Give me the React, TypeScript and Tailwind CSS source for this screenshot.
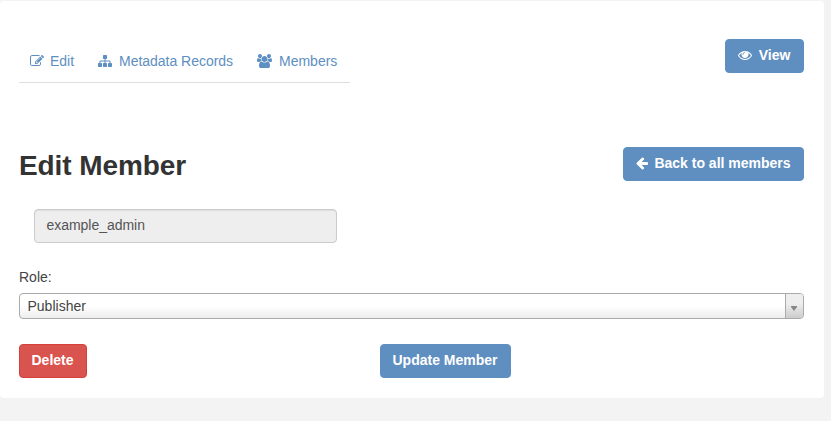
import type { ReactNode } from "react";

type IconProps = { d: string; viewBox: string; className: string };

function Icon({ d, viewBox, className }: IconProps) {
  return (
    <svg viewBox={viewBox} className={`shrink-0 ${className}`} fill="currentColor" aria-hidden="true">
      <path d={d} />
    </svg>
  );
}

const PENCIL =
  "M888 1184l116-116-152-152-116 116v56h96v96h56zm440-720q-16-16-33 1l-350 350q-17 17-1 33t33-1l350-350q17-17 1-33zm80 594v190q0 119-84.5 203.5t-203.5 84.5h-832q-119 0-203.5-84.5t-84.5-203.5v-832q0-119 84.5-203.5t203.5-84.5h832q63 0 117 25 15 7 18 23 3 17-9 29l-49 49q-14 14-32 8-23-6-45-6h-832q-66 0-113 47t-47 113v832q0 66 47 113t113 47h832q66 0 113-47t47-113v-126q0-13 9-22l64-64q15-15 35-7t20 29zm-96-738l288 288-672 672h-288v-288zm444 132l-92 92-288-288 92-92q28-28 68-28t68 28l152 152q28 28 28 68t-28 68z";
const SITEMAP =
  "M1792 1248v320q0 40-28 68t-68 28h-320q-40 0-68-28t-28-68v-320q0-40 28-68t68-28h96v-192h-512v192h96q40 0 68 28t28 68v320q0 40-28 68t-68 28h-320q-40 0-68-28t-28-68v-320q0-40 28-68t68-28h96v-192h-512v192h96q40 0 68 28t28 68v320q0 40-28 68t-68 28h-320q-40 0-68-28t-28-68v-320q0-40 28-68t68-28h96v-192q0-52 38-90t90-38h512v-192h-96q-40 0-68-28t-28-68v-320q0-40 28-68t68-28h320q40 0 68 28t28 68v320q0 40-28 68t-68 28h-96v192h512q52 0 90 38t38 90v192h96q40 0 68 28t28 68z";
const USERS =
  "M657 896q-162 5-265 128h-134q-82 0-138-40.5t-56-118.5q0-353 124-353 6 0 43.5 21t97.5 42.5 119 21.5q67 0 133-23-5 37-5 66 0 139 81 256zm1071 637q0 120-73 189.5t-194 69.5h-874q-121 0-194-69.5t-73-189.5q0-53 3.5-103.5t14-109 26.5-108.5 43-97.5 62-81 85.5-53.5 111.5-20q10 0 43 21.5t73 48 107 48 135 21.5 135-21.5 107-48 73-48 43-21.5q61 0 111.5 20t85.5 53.5 62 81 43 97.5 26.5 108.5 14 109 3.5 103.5zm-1024-1277q0 106-75 181t-181 75-181-75-75-181 75-181 181-75 181 75 75 181zm704 384q0 159-112.5 271.5t-271.5 112.5-271.5-112.5-112.5-271.5 112.5-271.5 271.5-112.5 271.5 112.5 112.5 271.5zm576 225q0 78-56 118.5t-138 40.5h-134q-103-123-265-128 81-117 81-256 0-29-5-66 66 23 133 23 59 0 119-21.5t97.5-42.5 43.5-21q124 0 124 353zm-128-609q0 106-75 181t-181 75-181-75-75-181 75-181 181-75 181 75 75 181z";
const EYE =
  "M1664 960q-152-236-381-353 61 104 61 225 0 185-131.5 316.5t-316.5 131.5-316.5-131.5-131.5-316.5q0-121 61-225-229 117-381 353 133 205 333.5 326.5t434.5 121.5 434.5-121.5 333.5-326.5zm-720-384q0-20-14-34t-34-14q-125 0-214.5 89.5t-89.5 214.5q0 20 14 34t34 14 34-14 14-34q0-86 61-147t147-61q20 0 34-14t14-34zm848 384q0 34-20 69-140 230-376.5 368.5t-499.5 138.5-499.5-139-376.5-368q-20-35-20-69t20-69q140-229 376.5-368t499.5-139 499.5 139 376.5 368q20 35 20 69z";
const ARROW_LEFT =
  "M1664 896v128q0 53-32.5 90.5t-84.5 37.5h-704l293 294q38 36 38 90t-38 90l-75 76q-37 37-90 37-52 0-91-37l-651-652q-37-37-37-90 0-52 37-91l651-650q38-38 91-38 52 0 90 38l75 74q38 38 38 91t-38 91l-293 293h704q52 0 84.5 37.5t32.5 90.5z";

function Button({ className, children }: { className: string; children: ReactNode }) {
  return (
    <button
      type="button"
      className={`flex h-[34px] items-center justify-center rounded border pr-px pb-0.5 text-sm font-bold whitespace-nowrap text-white ${className}`}
    >
      {children}
    </button>
  );
}

export default function App() {
  return (
    <div className="h-[421px] w-full bg-[#f3f3f3] pt-px font-['Liberation_Sans',Arial,sans-serif] text-sm text-[#444]">
      <main className="h-[397px] w-[824px] rounded bg-white pr-5 pl-[19px]">
        <header className="flex items-start justify-between pt-[38px]">
          <nav className="flex h-[44px] w-[331px] border-b border-[#ddd] pl-2.5 text-[#5d8fc1]">
            <a className="flex h-[44px] w-[69px] items-center">
              <Icon d={PENCIL} viewBox="0 0 1792 1792" className="mr-1.5 ml-px h-3.5 w-3.5" />
              Edit
            </a>
            <a className="flex h-[44px] w-[159px] items-center">
              <Icon d={SITEMAP} viewBox="0 0 1792 1792" className="mr-[7px] h-3.5 w-3.5" />
              <span className="tracking-[-0.02px]">Metadata Records</span>
            </a>
            <a className="flex h-[44px] items-center">
              <Icon d={USERS} viewBox="64 0 1920 1792" className="mr-[7px] h-3.5 w-[15px]" />
              Members
            </a>
          </nav>
          <Button className="w-[79px] border-[#5d8fc1] bg-[#5f8fc0]">
            <Icon d={EYE} viewBox="0 0 1792 1792" className="mr-[7px] h-3.5 w-3.5" />
            View
          </Button>
        </header>

        <section className="mt-[64px] flex h-[34px] items-center justify-between">
          <h1 className="pt-[3px] text-[28px] leading-[34px] font-bold tracking-[-0.08px] text-[#333]">Edit Member</h1>
          <Button className="w-[181px] border-[#5d8fc1] bg-[#5f8fc0]">
            <Icon d={ARROW_LEFT} viewBox="128 0 1536 1792" className="mr-[6.5px] ml-[0.5px] h-3.5 w-3" />
            Back to all members
          </Button>
        </section>

        <form>
          <div className="mt-7 ml-[15px] flex h-[34px] w-[303px] items-center rounded border border-[#ccc] bg-[#eee] px-[11.5px] pb-0.5 text-[#555] shadow-[inset_0_1px_1px_rgba(0,0,0,0.075)]">
            <span className="tracking-[-0.03px]">example_admin</span>
          </div>
          <label className="mt-6 block leading-5">Role:</label>
          <div className="mt-1.5 flex h-[26px] w-[785px] items-stretch justify-between overflow-hidden rounded border border-[#aaa] bg-linear-to-b from-white from-50% to-[#eee] pl-[7.5px]">
            <span className="leading-6">Publisher</span>
            <span className="flex w-[18px] border-l border-[#aaa] bg-linear-to-b from-[#eee] from-40% to-[#ccc] pt-3 pl-[5px]">
              <svg viewBox="0 0 6 5" className="h-[5px] w-1.5" fill="#888">
                <path d="M0 0h6v1L3 5 0 1z" />
              </svg>
            </span>
          </div>
          <div className="mt-[25px] flex gap-[293px]">
            <Button className="w-[68px] border-[#d43f3a] bg-[#d9534f]">Delete</Button>
            <Button className="w-[131px] border-[#5d8fc1] bg-[#5f8fc0]">Update Member</Button>
          </div>
        </form>
      </main>
    </div>
  );
}
